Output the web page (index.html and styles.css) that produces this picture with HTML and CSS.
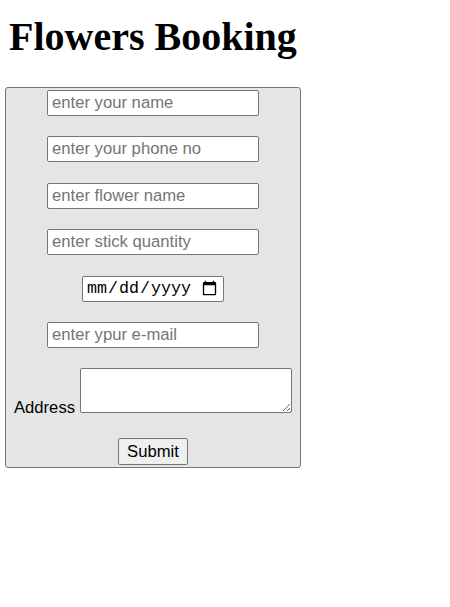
FILE: index.html
```html
<!DOCTYPE html>
<html>
<head>
<meta charset="utf-8">
<link rel="stylesheet" href="styles.css">
</head>
<body>
<h1 class="title">Flowers Booking</h1>
<form class="booking">
  <input class="field" type="text" placeholder="enter your name">
  <input class="field" type="text" placeholder="enter your phone no">
  <input class="field" type="text" placeholder="enter flower name">
  <input class="field" type="text" placeholder="enter stick quantity">
  <input class="date" type="date">
  <input class="field" type="text" placeholder="enter ypur e-mail">
  <div class="address-row">
    <label class="address-label">Address</label>
    <textarea class="address"></textarea>
  </div>
  <button class="submit" type="button">Submit</button>
</form>
</body>
</html>
```
FILE: styles.css
```css
html, body {
  margin: 0;
  padding: 0;
  background: #ffffff;
}
body {
  font-family: "Liberation Sans", Arial, sans-serif;
  color: #000;
}
.title {
  font-family: "Liberation Serif", "Times New Roman", serif;
  font-weight: bold;
  font-size: 40px;
  line-height: 46px;
  margin: 14px 0 27px 9px;
}
.booking {
  box-sizing: border-box;
  width: 296px;
  height: 381px;
  margin-left: 5px;
  background: #e5e5e5;
  border: 1px solid #767676;
  border-radius: 3px;
  padding-top: 2px;
  display: flex;
  flex-direction: column;
  align-items: center;
}
.field {
  box-sizing: border-box;
  width: 212px;
  height: 26px;
  margin: 0 0 20.4px 0;
  padding: 1px 4px;
  border: 1px solid #767676;
  border-radius: 2px;
  background: #fff;
  font-family: "Liberation Sans", Arial, sans-serif;
  font-size: 16.67px;
  color: #000;
}
.field::placeholder {
  color: #757575;
}
.date {
  box-sizing: border-box;
  width: 142px;
  height: 26px;
  margin: 0 0 20.4px 0;
  padding: 1px 3px;
  border: 1px solid #767676;
  border-radius: 2px;
  background: #fff;
  font-family: "Liberation Mono", "Courier New", monospace;
  font-size: 16.67px;
  color: #000;
}
.address-row {
  display: flex;
  align-items: flex-end;
  gap: 5px;
  margin-left: 0;
}
.address-label {
  font-size: 16.67px;
  line-height: 18px;
  margin-bottom: -3.5px;
}
.address {
  box-sizing: border-box;
  width: 212px;
  height: 45px;
  margin: 0;
  border: 1px solid #767676;
  border-radius: 2px;
  background: #fff;
  font-family: "Liberation Mono", monospace;
  font-size: 13px;
}
.submit {
  box-sizing: border-box;
  margin-top: 25px;
  width: 70px;
  height: 27px;
  padding: 1px 6px;
  border: 1px solid #767676;
  border-radius: 2px;
  background: #efefef;
  font-family: "Liberation Sans", Arial, sans-serif;
  font-size: 16.67px;
  color: #000;
}
```
